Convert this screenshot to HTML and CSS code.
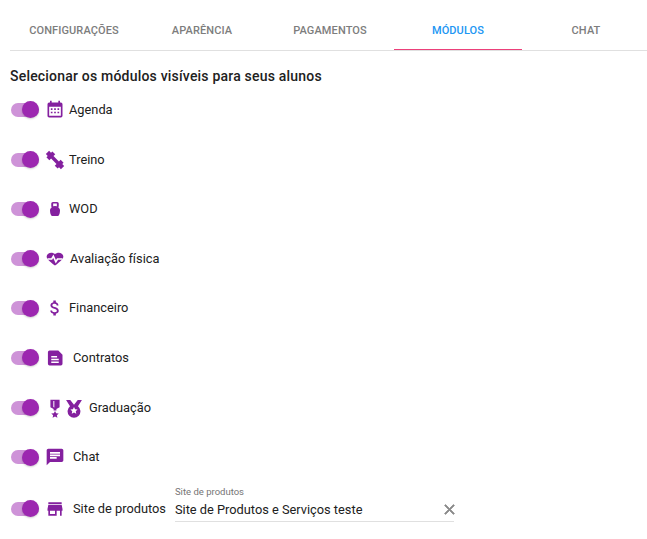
FILE: index.html
```html
<!DOCTYPE html>
<html lang="pt">
<head>
<meta charset="utf-8">
<title>Módulos</title>
<link rel="stylesheet" href="styles.css">
</head>
<body>
<nav class="tabs">
  <a class="tab">CONFIGURAÇÕES</a>
  <a class="tab">APARÊNCIA</a>
  <a class="tab">PAGAMENTOS</a>
  <a class="tab active">MÓDULOS</a>
  <a class="tab">CHAT</a>
</nav>
<main class="content">
  <h2 class="title">Selecionar os módulos visíveis para seus alunos</h2>
  <div class="row">
    <span class="switch"></span>
    <svg class="icon" viewBox="0 0 24 24"><path d="M9,10V12H7V10H9M13,10V12H11V10H13M17,10V12H15V10H17M19,3A2,2 0 0,1 21,5V19A2,2 0 0,1 19,21H5C3.89,21 3,20.1 3,19V5A2,2 0 0,1 5,3H6V1H8V3H16V1H18V3H19M19,19V8H5V19H19M9,14V16H7V14H9M13,14V16H11V14H13M17,14V16H15V14H17Z"/></svg>
    <span class="label">Agenda</span>
  </div>
  <div class="row">
    <span class="switch"></span>
    <svg class="icon" viewBox="0 0 24 24"><path d="M8.800 1.700 L12.300 5.200 L10.200 7.300 L16.700 13.800 L18.800 11.700 L22.300 15.200 L20.700 16.800 L23 19.100 L19.100 23 L16.800 20.700 L15.200 22.300 L11.700 18.800 L13.800 16.700 L7.300 10.200 L5.200 12.300 L1.700 8.800 L3.300 7.200 L1 4.900 L4.900 1 L7.200 3.300 Z"/></svg>
    <span class="label">Treino</span>
  </div>
  <div class="row">
    <span class="switch"></span>
    <svg class="icon" viewBox="0 0 24 24"><path d="M9.500 3.500h5a2 2 0 0 1 2 2v3a2 2 0 0 1-.6 1.400c1.300.9 2.100 2.300 2.100 4.100 0 2-.5 3.900-1.300 5.500-.3.600-.8 1-1.500 1H8.800c-.7 0-1.200-.4-1.500-1C6.500 17.900 6 16 6 14c0-1.800.8-3.200 2.100-4.100a2 2 0 0 1-.6-1.400v-3a2 2 0 0 1 2-2zm.3 2v3.200a7 7 0 0 1 4.400 0V5.500z" fill-rule="evenodd"/></svg>
    <span class="label">WOD</span>
  </div>
  <div class="row">
    <span class="switch"></span>
    <svg class="icon" viewBox="0 0 24 24"><g transform="translate(0 2) scale(1 .84)"><path d="M12 21.350l-1.450-1.320C5.400 15.360 2 12.280 2 8.500 2 5.420 4.420 3 7.500 3c1.740 0 3.410.81 4.500 2.090C13.090 3.810 14.760 3 16.500 3 19.580 3 22 5.420 22 8.500c0 3.780-3.400 6.860-8.550 11.540L12 21.350z"/><polyline class="cut" points="3,12 8,12 10,8 13,16 15,12 21,12"/></g></svg>
    <span class="label label-m5">Avaliação física</span>
  </div>
  <div class="row">
    <span class="switch"></span>
    <svg class="icon" viewBox="0 0 24 24"><path d="M11.800 10.900c-2.270-.59-3-1.200-3-2.150 0-1.090 1.010-1.850 2.700-1.850 1.780 0 2.440.85 2.500 2.100h2.210c-.07-1.720-1.120-3.300-3.210-3.810V3h-3v2.160c-1.940.42-3.500 1.680-3.500 3.610 0 2.310 1.910 3.460 4.700 4.130 2.500.6 3 1.480 3 2.410 0 .69-.49 1.790-2.700 1.790-2.060 0-2.870-.92-2.980-2.100h-2.200c.12 2.190 1.760 3.420 3.680 3.830V21h3v-2.150c1.950-.37 3.500-1.500 3.500-3.550 0-2.840-2.430-3.810-4.700-4.400z"/></svg>
    <span class="label">Financeiro</span>
  </div>
  <div class="row">
    <span class="switch"></span>
    <svg class="icon" viewBox="0 0 24 24"><path d="M5.500 3H16l5 5v11a2 2 0 0 1-2 2H5.500a2 2 0 0 1-2-2V5a2 2 0 0 1 2-2zM7.500 9.500v1.800h7v-1.800zm0 3.400v1.800h9v-1.800zm0 3.400v1.800h9v-1.800z" fill-rule="evenodd"/></svg>
    <span class="label label-m8">Contratos</span>
  </div>
  <div class="row">
    <span class="switch"></span>
    <svg class="icon" viewBox="0 0 24 24"><path d="M6.500 2h11v9l-3.800 2.200V15h-3.400v-1.800L6.500 11zM12 15.500l1.400 2.800 3.100.3-2.300 2 .7 3-2.900-1.500-2.900 1.500.7-3-2.300-2 3.100-.3zM10 3.500v7.200l1.200.7V3.500z" fill-rule="evenodd"/></svg>
    <svg class="icon icon-badge" viewBox="0 0 24 24"><path d="M2.500 2.500h5L12 8l4.500-5.500h5L16.800 10a7.700 7.700 0 1 1-9.600 0zM12 10.800l1.300 2.700 3 .3-2.200 2 .6 3-2.700-1.500-2.700 1.500.6-3-2.200-2 3-.3z" fill-rule="evenodd"/></svg>
    <span class="label label-m5">Graduação</span>
  </div>
  <div class="row">
    <span class="switch"></span>
    <svg class="icon" viewBox="0 0 24 24"><path d="M20 2H4c-1.100 0-1.990.9-1.990 2L2 22l4-4h14c1.100 0 2-.9 2-2V4c0-1.100-.9-2-2-2zM6 9h12v2H6V9zm8 5H6v-2h8v2zm4-6H6V6h12v2z"/></svg>
    <span class="label label-m8">Chat</span>
  </div>
  <div class="row row-last">
    <span class="switch"></span>
    <svg class="icon" viewBox="0 0 24 24"><path d="M20 4H4v2h16V4zm1 10v-2l-1-5H4l-1 5v2h1v6h10v-6h4v6h2v-6h1zm-9 4H6v-4h6v4z"/></svg>
    <span class="label label-m8">Site de produtos</span>
    <div class="field">
      <span class="field-label">Site de produtos</span>
      <div class="field-input">
        <span class="field-value">Site de Produtos e Serviços teste</span>
        <svg class="clear" viewBox="0 0 24 24"><path d="M19 6.410L17.590 5 12 10.590 6.410 5 5 6.410 10.590 12 5 17.590 6.410 19 12 13.410 17.590 19 19 17.590 13.410 12z"/></svg>
      </div>
    </div>
  </div>
</main>
</body>
</html>
```

FILE: styles.css
```css
* { box-sizing: border-box; }
html, body { margin: 0; padding: 0; background: #fff; overflow: hidden; }
body { width: 647px; height: 539px; font-family: Roboto, "Liberation Sans", sans-serif; color: #212121; }

.tabs { display: flex; margin-left: 10px; height: 51px; border-bottom: 1px solid #e0e0e0; }
.tab { flex: 0 0 128px; display: flex; align-items: center; justify-content: center; height: 50px; padding-top: 10px; font-size: 11px; font-weight: 500; letter-spacing: 0.1px; color: #7d7d7d; }
.tab.active { color: #2196f3; padding-top: 11px; border-bottom: 1px solid #ec407a; }

.content { padding-left: 11px; }
.title { margin: 0 0 0 -1px; padding-top: 17px; height: 34.2px; font-size: 14px; line-height: 17px; font-weight: 500; letter-spacing: 0.2px; color: #212121; }

.row { display: flex; align-items: center; height: 49.6px; }
.row-last { height: 54px; }

.switch { position: relative; flex: none; width: 28px; height: 14px; border-radius: 7px; background: #ce93d8; margin-right: 6px; }
.switch::after { content: ""; position: absolute; right: 0; top: -1.500px; width: 17px; height: 17px; border-radius: 50%; background: #9c27b0; box-shadow: 0 1px 2px rgba(0,0,0,.2); }

.icon { flex: none; width: 20px; height: 20px; fill: #84209f; }
.icon-badge { margin-left: -1px; }
.cut { fill: none; stroke: #fff; stroke-width: 2; }

.label { margin-left: 4px; font-size: 12.800px; line-height: 20px; color: #212121; white-space: nowrap; }
.label-m5 { margin-left: 5px; }
.label-m8 { margin-left: 8px; }

.field { flex: none; width: 279px; margin-left: 9px; margin-bottom: 10px; }
.field-label { display: block; font-size: 9.500px; line-height: 12px; color: #757575; }
.field-input { display: flex; align-items: center; justify-content: space-between; height: 24px; padding-bottom: 0; border-bottom: 1px solid #e0e0e0; }
.field-value { font-size: 12.800px; color: #212121; }
.clear { width: 17px; height: 17px; fill: #8a8a8a; stroke: #8a8a8a; stroke-width: 1; margin-right: -4px; }
```
